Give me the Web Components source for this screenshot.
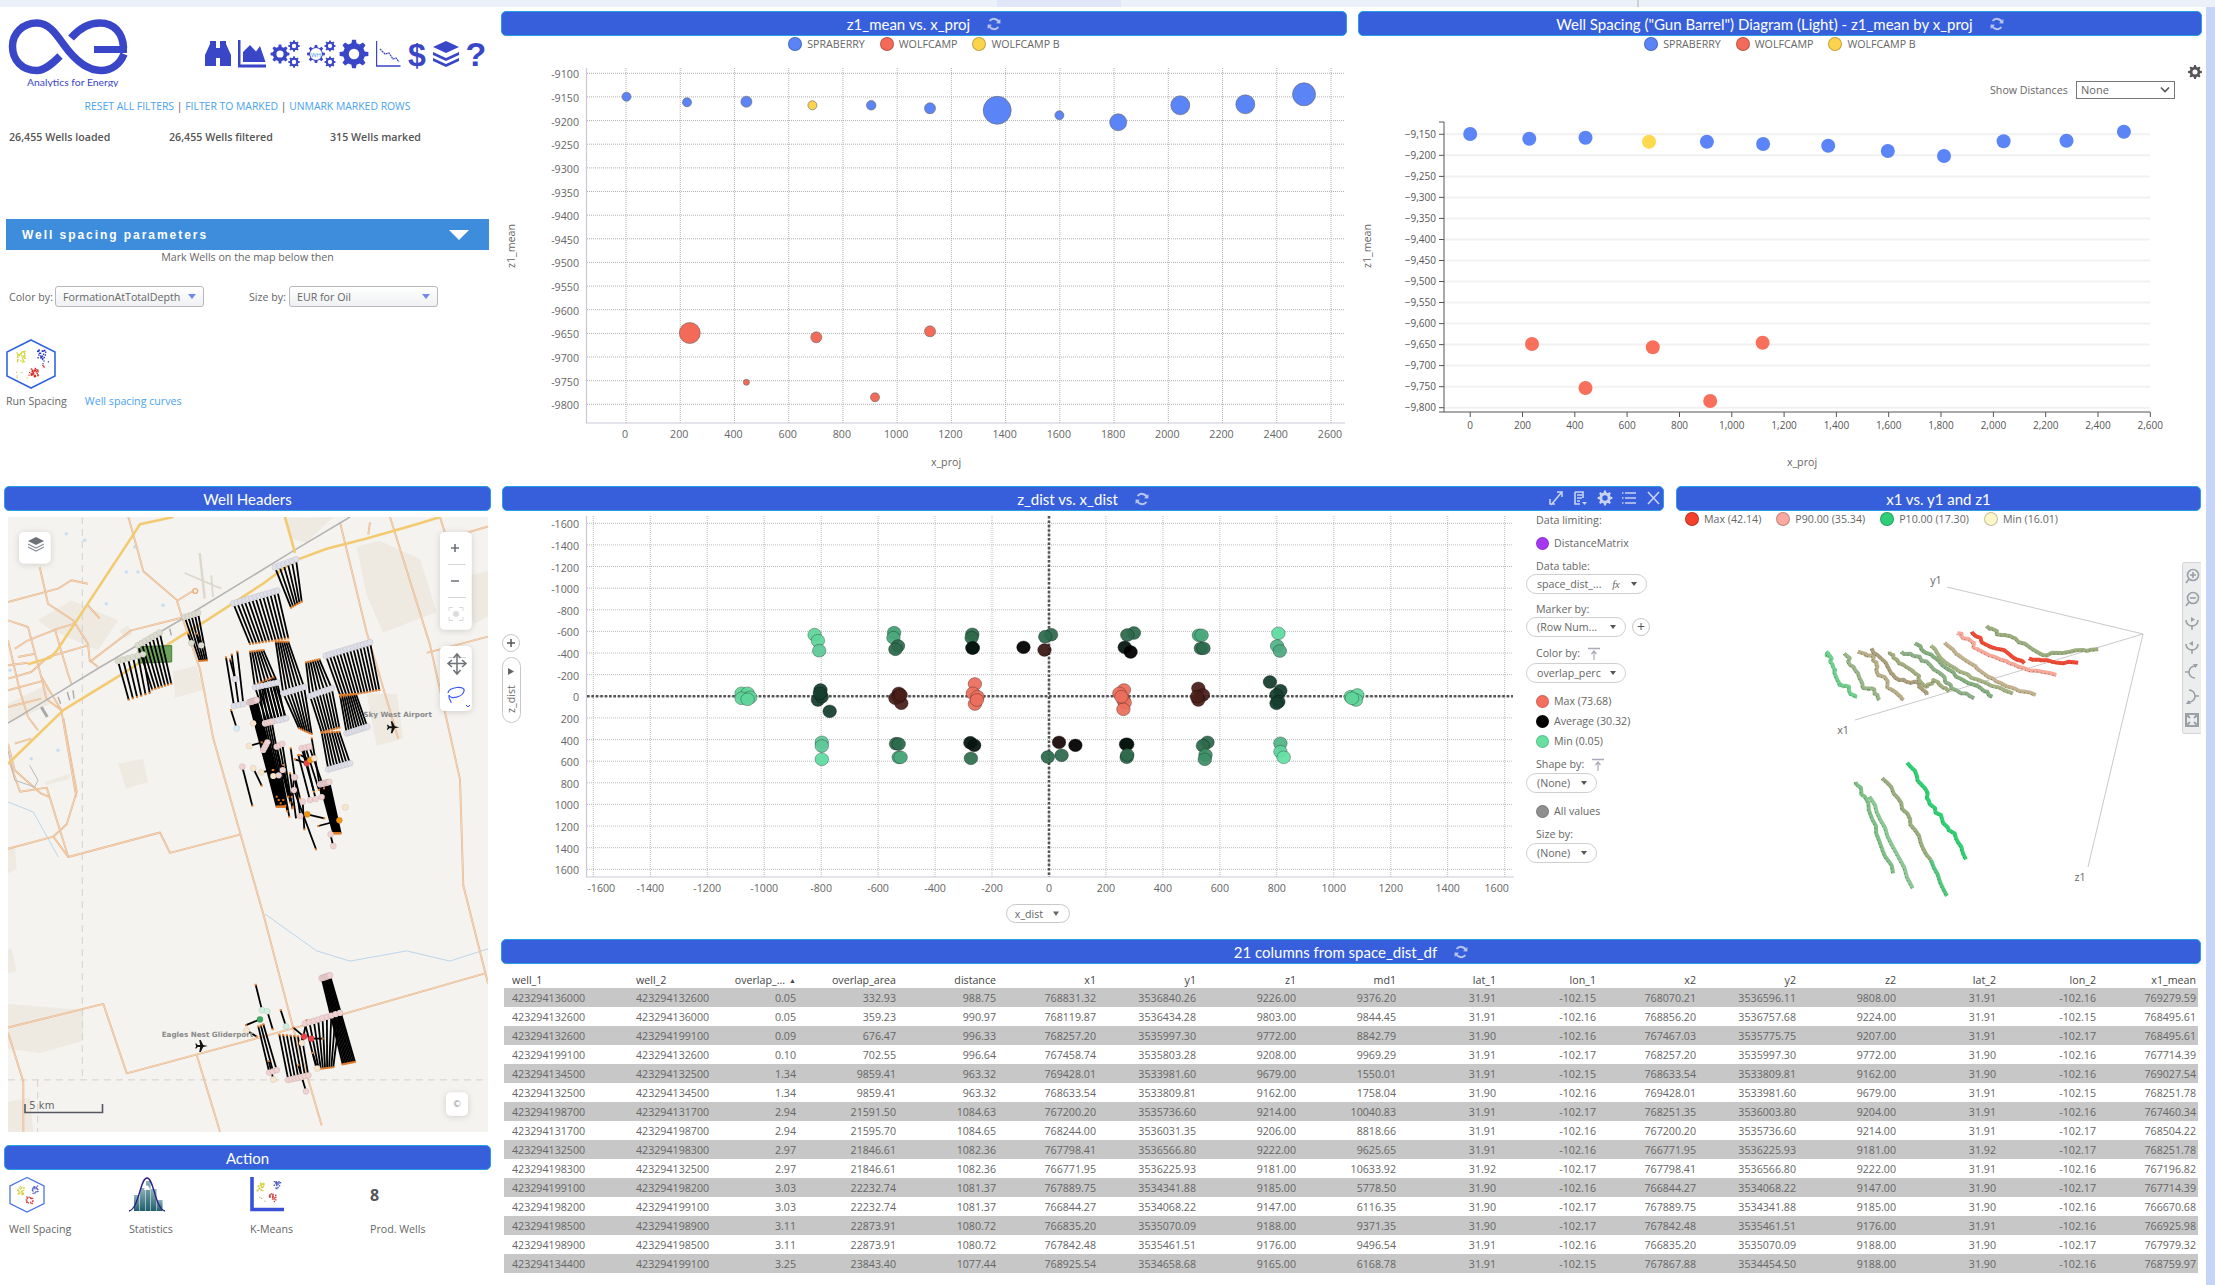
<!DOCTYPE html>
<html>
<head>
<meta charset="utf-8">
<title>Well Spacing</title>
<style>
  html, body { margin: 0; padding: 0; background: #fff; }
  body { font-family: "Open Sans", "Liberation Sans", sans-serif; font-size: 10.67px; color: #666; width: 2215px; height: 1285px; overflow: hidden; }
</style>
</head>
<body>
<app-shell>
  <top-strip></top-strip>
  <div style="display:flex;width:2215px;height:1278px">
    <left-column>
      <app-header></app-header>
      <filter-links></filter-links>
      <well-counts></well-counts>
      <spacing-params></spacing-params>
      <panel-title>Well Headers</panel-title>
      <well-map></well-map>
      <panel-title style="margin-top:13px">Action</panel-title>
      <action-row></action-row>
    </left-column>
    <right-column>
      <div style="display:flex;gap:11px;height:475px">
        <chart-panel style="width:846px" heading="z1_mean vs. x_proj" refresh>
          <chart-legend class="c" items="SPRABERRY:#5b84f7,WOLFCAMP:#f36b58,WOLFCAMP B:#fbd34d"></chart-legend>
          <bubble-chart></bubble-chart>
        </chart-panel>
        <chart-panel style="width:844px" heading='Well Spacing ("Gun Barrel") Diagram (Light) - z1_mean by x_proj' refresh>
          <chart-legend class="c" items="SPRABERRY:#5b84f7,WOLFCAMP:#f36b58,WOLFCAMP B:#fbd34d"></chart-legend>
          <barrel-chart></barrel-chart>
        </chart-panel>
      </div>
      <div style="display:flex;gap:12px;height:453px;margin-left:1px">
        <chart-panel style="width:1162px" heading="z_dist vs. x_dist" refresh actions>
          <div style="display:flex">
            <dist-chart></dist-chart>
            <marker-sidebar></marker-sidebar>
          </div>
        </chart-panel>
        <chart-panel style="width:525px" heading="x1 vs. y1 and z1">
          <chart-legend items="Max (42.14):#f4402c,P90.00 (35.34):#f9a99d,P10.00 (17.30):#2fce78,Min (16.01):#fdf6c9"></chart-legend>
          <view-3d></view-3d>
        </chart-panel>
      </div>
      <chart-panel style="width:1700px" heading="21 columns from space_dist_df" refresh>
        <data-table></data-table>
      </chart-panel>
    </right-column>
    <div style="width:9px;margin-left:4px;background:#c6d4f8"></div>
  </div>
</app-shell>

<script>
const BLUE = '#3a46c8';

function gearPath(cx, cy, r, teeth = 8, hole = 0.38) {
  const root = r * 0.76, pts = [], step = Math.PI * 2 / teeth;
  for (let i = 0; i < teeth; i++) {
    const a = i * step;
    [[-0.3, root], [-0.17, r], [0.17, r], [0.3, root]].forEach(([o, rad]) => {
      pts.push((cx + rad * Math.cos(a + o * step)).toFixed(2) + ' ' + (cy + rad * Math.sin(a + o * step)).toFixed(2));
    });
  }
  const h = r * hole;
  return 'M' + pts.join('L') + 'Z' + `M${cx - h} ${cy}a${h} ${h} 0 1 0 ${h * 2} 0a${h} ${h} 0 1 0 ${-h * 2} 0Z`;
}

// small repeatable random, the scatter icons need the same dots every time
function seeded(s) {
  return () => { s = (s * 16807) % 2147483647; return (s & 0xffff) / 0xffff; };
}

function scatterDots(rand, cx, cy, spread, n, color, size) {
  let out = '';
  for (let i = 0; i < n; i++) {
    const x = cx + (rand() - 0.5) * spread, y = cy + (rand() - 0.5) * spread * 1.2;
    out += `<rect x="${x.toFixed(1)}" y="${y.toFixed(1)}" width="${size}" height="${size}" fill="${color}"/>`;
  }
  return out;
}

function shell(el, html) {
  el.attachShadow({ mode: 'open' });
  el.shadowRoot.innerHTML = html;
}

class AppShell extends HTMLElement {
  connectedCallback() {
    shell(this, `<style>:host{display:block;width:2215px;height:1285px;overflow:hidden}</style><slot></slot>`);
  }
}

class TopStrip extends HTMLElement {
  connectedCallback() {
    shell(this, `<style>
      :host{display:block;height:7px;
        background:
          linear-gradient(#cfcfcf,#cfcfcf) 1637px 0/2px 7px no-repeat,
          linear-gradient(#e1e7f8,#e1e7f8) 997px 0/124px 7px no-repeat,
          #ecf0f9}
    </style>`);
  }
}

class LeftColumn extends HTMLElement {
  connectedCallback() {
    shell(this, `<style>:host{display:flex;flex-direction:column;width:501px;flex:none}
      ::slotted(panel-title){margin:0 10px 0 4px}</style><slot></slot>`);
  }
}

class RightColumn extends HTMLElement {
  connectedCallback() {
    shell(this, `<style>:host{display:block;width:1701px;flex:none;padding-top:4px}</style><slot></slot>`);
  }
}

class AppHeader extends HTMLElement {
  connectedCallback() {
    const gears = (x, r1, r2, hole) => `
      <path d="${gearPath(x, 54, r1, 8, hole)}" fill="${BLUE}" fill-rule="evenodd"/>
      <path d="${gearPath(x + 14, 46, r2, 8)}" fill="${BLUE}" fill-rule="evenodd"/>
      <path d="${gearPath(x + 14, 62, r2, 8)}" fill="${BLUE}" fill-rule="evenodd"/>`;
    shell(this, `<style>
      :host{display:flex;height:76px;padding:12px 0 0 7px;box-sizing:content-box;justify-content:space-between}
      svg{display:block}
    </style>
    <svg width="122" height="68" viewBox="7 19 122 68">
      <g fill="none" stroke="${BLUE}" stroke-width="7.5">
        <path d="M71 38C78 30 88 23 100 23C114 23 123 33 123.5 48"/>
        <path d="M60 56C53 63 45 70.5 37 70.5C22 70.5 12.5 60 12.5 46.5C12.5 33 23 23 37 23C49 23 56 34 64 45C72 56 85 70.5 101 70.5C112 70.5 120 64 124 54"/>
        <path d="M94 49.5H127" stroke-width="7"/>
      </g>
      <text x="27" y="86" font-family="Lato,sans-serif" font-size="10.4" fill="${BLUE}">Analytics for Energy</text>
    </svg>
    <svg width="290" height="60" viewBox="200 25 290 60" style="margin:6px 11px 0 0">
      <g fill="${BLUE}">
        <path d="M205 66V55L210 44V41H216V66ZM231 66V55L226 44V41H220V66ZM216 48H220V58H216Z"/>
        <path d="M238 40H240.5V64.5H266V67.5H238ZM243 62V52L250 45L256 51.5L260 46L265.5 62Z"/>
        ${gears(280, 9.5, 5.8, 0.38)}
        ${gears(316, 9, 5.6, 0.66)}
        <path d="${gearPath(354, 54, 14.5, 8, 0.36)}" fill-rule="evenodd"/>
        <path d="M376 41H377.2V65.2H400.5V66.8H376Z"/>
        <path d="M380 49L385 54L389 53L393 59L396 58L399 62" fill="none" stroke="${BLUE}" stroke-width="1.2" stroke-dasharray="2 .6"/>
        <path d="M446 41L459 47L446 53L433 47Z"/>
        <path d="M433 52L446 58L459 52V55L446 61L433 55Z"/>
        <path d="M433 58L446 64L459 58V61L446 67L433 61Z"/>
      </g>
      <text x="316" y="56.500" text-anchor="middle" font-family="Open Sans" font-size="6" fill="#3d9be8">WH</text>
      <g font-family="Liberation Sans" font-weight="700" fill="${BLUE}" text-anchor="middle">
        <text x="417" y="66" font-size="32">$</text>
        <text x="476" y="66" font-size="34">?</text>
      </g>
    </svg>`);
  }
}

class FilterLinks extends HTMLElement {
  connectedCallback() {
    shell(this, `<style>
      :host{display:block;height:22px;line-height:22px;text-align:center;width:495px;color:#4aa3ef;white-space:nowrap;font-size:10.4px}
      i{font-style:normal;color:#555}
    </style>RESET ALL FILTERS <i>|</i> FILTER TO MARKED <i>|</i> UNMARK MARKED ROWS`);
  }
}

class WellCounts extends HTMLElement {
  connectedCallback() {
    shell(this, `<style>
      :host{display:grid;grid-template-columns:160px 161px 160px;padding-left:9px;margin-top:13px;height:14px;line-height:14px;color:#555;font-weight:600}
    </style><span>26,455 Wells loaded</span><span>26,455 Wells filtered</span><span>315 Wells marked</span>`);
  }
}

class SelectBox extends HTMLElement {
  connectedCallback() {
    shell(this, `<style>
      :host{display:flex;align-items:center;justify-content:space-between;box-sizing:border-box;height:21px;width:149px;padding:0 7px;
        border:1px solid #b8b8bc;border-radius:3px;background:linear-gradient(#fff,#eef0f2);color:#666}
      b{width:0;height:0;border:4px solid transparent;border-top:5px solid #7089e8;border-bottom:0}
    </style><slot></slot><b></b>`);
  }
}

class SpacingParams extends HTMLElement {
  connectedCallback() {
    const rand = seeded(77);
    shell(this, `<style>
      :host{display:block;height:267px;margin-top:75px}
      .bar{margin-left:6px;width:483px;height:31px;background:#3e8ddd;color:#fff;display:flex;align-items:center;justify-content:space-between;padding:0 20px 0 16px;box-sizing:border-box;
        font:700 12px "Liberation Sans",sans-serif;letter-spacing:1.95px}
      .bar b{width:0;height:0;border:10px solid transparent;border-top:10px solid #fff;border-bottom:0}
      .note{text-align:center;width:495px;height:15px;line-height:15px;color:#666}
      .sel{display:flex;align-items:center;margin:21px 0 0 9px;height:21px}
      .sel span{width:46px}
      .sel span+select-box{margin-right:45px}
      .sel span.s{width:40px}
      svg{display:block;margin:32px 0 0 6px}
      .links{display:flex;margin:5px 0 0 6px;line-height:14px;gap:18px}
      .links a{color:#4aa3ef}
    </style>
    <div class="bar">Well spacing parameters<b></b></div>
    <div class="note">Mark Wells on the map below then</div>
    <div class="sel"><span>Color by:</span><select-box>FormationAtTotalDepth</select-box><span class="s">Size by:</span><select-box>EUR for Oil</select-box></div>
    <svg width="50" height="50" viewBox="6 339 50 50">
      <polygon points="31,340 55,352 55,376 31,388 7,376 7,352" fill="#fff" stroke="#3566e0" stroke-width="1.6"/>
      ${scatterDots(rand, 20, 356, 9, 34, '#d2d33c', 1.4)}${scatterDots(rand, 23, 368, 16, 5, '#c9c95a', 1.2)}
      ${scatterDots(rand, 41, 354, 8, 22, '#2430b8', 1.4)}${scatterDots(rand, 43, 362, 10, 4, '#2430b8', 1.2)}
      ${scatterDots(rand, 34, 372, 7, 28, '#d2231f', 1.4)}${scatterDots(rand, 36, 366, 16, 5, '#d2231f', 1.2)}
    </svg>
    <div class="links"><span>Run Spacing</span><a>Well spacing curves</a></div>`);
  }
}

class PanelTitle extends HTMLElement {
  connectedCallback() {
    const refresh = this.hasAttribute('refresh') ? `<svg width="14" height="14" viewBox="0 0 14 14" fill="none" stroke="#b8c4ea" stroke-width="2">
        <path d="M12 5.5A5.4 5.4 0 0 0 2.6 4M2 8.5A5.4 5.4 0 0 0 11.4 10"/>
        <path d="M9 6.2L13.4 6.6V2Z M5 7.8L.6 7.4V12Z" fill="#b8c4ea" stroke="none"/>
      </svg>` : '';
    shell(this, `<style>
      :host{display:grid;grid-template-columns:1fr auto 1fr;align-items:center;box-sizing:border-box;height:25px;background:#375fdb;border:1px solid #2a9fe8;border-radius:5px;
        color:#fff;font:15px/23px Lato,"Liberation Sans",sans-serif;white-space:nowrap}
      .t{grid-column:2;display:flex;align-items:center;gap:17px}
      .t span{position:relative;top:1px}
      .a{grid-column:3;display:flex;justify-content:flex-end}
    </style><div class="t"><span><slot></slot></span>${refresh}</div><div class="a"><slot name="actions"></slot></div>`);
  }
}

class ChartPanel extends HTMLElement {
  connectedCallback() {
    const heading = this.getAttribute('heading');
    const actions = this.hasAttribute('actions') ? `<svg slot="actions" width="116" height="23" viewBox="1548 487 116 23" style="display:block" fill="none" stroke="#c9d2f0" stroke-width="1.6">
        <path d="M1552 505L1562 493M1558 492H1563V497M1551 499V504H1556"/>
        <path d="M1576 492H1584V498M1576 492V504H1581M1578 495H1583M1578 498H1583M1578 501H1581"/>
        <path d="M1583 502H1588L1585.5 505Z" fill="#c9d2f0" stroke="none"/>
        <path d="${gearPath(1606, 498, 7.5, 8, 0.36)}" fill="#c9d2f0" fill-rule="evenodd" stroke="none"/>
        <path d="M1626 493H1637M1626 498H1637M1626 503H1637M1623 493H1624.5M1623 498H1624.5M1623 503H1624.5"/>
        <path d="M1649 492L1660 504M1660 492L1649 504"/>
      </svg>` : '';
    shell(this, `<style>:host{display:block}</style>
      <panel-title ${this.hasAttribute('refresh') ? 'refresh' : ''}>${heading.replace(/"/g, '&quot;')}${actions}</panel-title>
      <slot></slot>`);
  }
}

class ChartLegend extends HTMLElement {
  connectedCallback() {
    const items = this.getAttribute('items').split(',').map(s => s.split(':'));
    const center = this.classList.contains('c');
    shell(this, `<style>
      :host{display:flex;gap:15px;height:16px;align-items:center;color:#666;${center ? 'justify-content:center;' : 'padding-left:9px;'}}
      span{display:flex;align-items:center;gap:5px;white-space:nowrap}
      i{width:14px;height:14px;border-radius:50%;border:1px solid rgba(0,0,0,.22);box-sizing:border-box}
    </style>` + items.map(([t, c]) => `<span><i style="background:${c}"></i>${t}</span>`).join(''));
  }
}

class BubbleChart extends HTMLElement {
  connectedCallback() {
    const X = v => 626 + v * 0.27115, Y = v => 73.3 + (-9100 - v) * 0.47286;
    let grid = '', labels = '';
    for (let v = 0; v <= 2600; v += 200) {
      grid += `<line x1="${X(v)}" x2="${X(v)}" y1="68" y2="423"/>`;
      labels += `<text x="${X(v) - 1}" y="${438}" text-anchor="middle">${v}</text>`;
    }
    for (let v = -9100; v >= -9800; v -= 50) {
      const y = Y(v).toFixed(1);
      grid += `<line x1="587" x2="1345" y1="${y}" y2="${y}"/>`;
      labels += `<text x="579" y="${+y + 5}" text-anchor="end">${v}</text>`;
    }
    const pts = [
      [626.5, 96.7, 9, 0], [687, 102.3, 9, 0], [746.4, 101.7, 11, 0], [812.4, 105.3, 9, 2], [871.2, 105.3, 9.5, 0], [930, 108.3, 11, 0],
      [997.2, 110.3, 28, 0], [1059.4, 115.3, 9, 0], [1118.2, 122.3, 17, 0], [1180.3, 105.3, 19, 0], [1245.3, 104.3, 19, 0], [1304, 94.3, 23, 0],
      [689.8, 333, 21, 1], [816.3, 337.3, 11, 1], [930, 331.3, 11, 1], [746.4, 382.3, 6, 1], [875, 397.3, 9, 1]
    ];
    const cols = ['#5b84f7', '#f36b58', '#fbd34d'];
    shell(this, `<style>:host{display:block}svg{display:block}text{font:10.67px "Open Sans",sans-serif;fill:#666}</style>
      <svg width="846" height="434" viewBox="501 52 846 434">
        <g stroke="#b0b0b0" stroke-dasharray="1 1">${grid}</g>
        <path d="M586.5 68V423H1345" fill="none" stroke="#c9c9d8" stroke-width="1.2"/>
        ${pts.map(p => `<circle cx="${p[0]}" cy="${p[1]}" r="${p[2] / 2}" fill="${cols[p[3]]}" stroke="#666" stroke-width=".6"/>`).join('')}
        ${labels}
        <text x="946" y="466" text-anchor="middle">x_proj</text>
        <text transform="translate(515 246) rotate(-90)" text-anchor="middle">z1_mean</text>
      </svg>`);
  }
}

class BarrelChart extends HTMLElement {
  connectedCallback() {
    const X = v => 1470.2 + v * 0.26158, Y = v => 134.3 + (-9150 - v) * 0.42062;
    let grid = '', ticks = '', labels = '';
    for (let v = 0; v <= 2600; v += 200) {
      const x = X(v).toFixed(1);
      ticks += `M${x} 412V417`;
      labels += `<text x="${x}" y="${429}" text-anchor="middle">${v.toLocaleString('en-US')}</text>`;
    }
    for (let v = -9150; v >= -9800; v -= 50) {
      const y = Y(v).toFixed(1);
      grid += `<line x1="1444" x2="2150" y1="${y}" y2="${y}"/>`;
      ticks += `M1444 ${y}H1439`;
      labels += `<text x="1436" y="${+y + 3.5}" text-anchor="end">\u2212${Math.abs(v).toLocaleString('en-US')}</text>`;
    }
    const dots = [[218, 402, 0], [325, 416, 0], [427, 413, 0], [542, 425, 2], [647, 425, 0], [749, 432, 0], [867, 437, 0], [975, 453, 0], [1077, 468, 0], [1185, 424, 0], [1299, 422, 0], [1403, 395, 0],
      [330, 1032, 1], [549, 1042, 1], [748, 1028, 1], [427, 1164, 1], [653, 1203, 1]];
    const cols = ['#5b84f7', '#f8705c', '#fcd94f'];
    shell(this, `<style>:host{display:block}svg{display:block}text{font:10px "Open Sans",sans-serif;fill:#555}</style>
      <svg width="844" height="434" viewBox="1358 52 844 434">
        <g stroke="#f1f1f1" stroke-width="2">${grid}</g>
        <path d="M1444 122V412H2150 ${ticks} M1439 122H1444M1439 412H1444" fill="none" stroke="#555"/>
        ${dots.map(d => `<circle cx="${(1350 + d[0] / 1.813).toFixed(1)}" cy="${(d[1] / 3).toFixed(1)}" r="7" fill="${cols[d[2]]}"/>`).join('')}
        ${labels}
        <text x="1802" y="466" text-anchor="middle" style="font-size:10.67px;fill:#666">x_proj</text>
        <text transform="translate(1371 246) rotate(-90)" text-anchor="middle" style="font-size:10.67px;fill:#666">z1_mean</text>
        <path d="${gearPath(2195, 72, 7, 8, 0.36)}" fill="#555" fill-rule="evenodd"/>
        <text x="1990" y="94" style="font-size:10.67px;fill:#666">Show Distances</text>
        <rect x="2076.5" y="81.5" width="98" height="17" fill="#fff" stroke="#777"/>
        <text x="2081" y="94" style="font-size:11px;fill:#666">None</text>
        <path d="M2161 87.5L2165 91.5L2169 87.5" fill="none" stroke="#555" stroke-width="1.6"/>
      </svg>`);
  }
}

class DistChart extends HTMLElement {
  connectedCallback() {
    const px = X => +(490 + X / 1.522).toFixed(1), py = Y => +(480 + Y / 3).toFixed(1);
    const X = v => 1049 + v * 0.2848, Y = v => 696.3 + v * 0.10813;
    let grid = '', labels = '';
    for (let v = -1600; v <= 1600; v += 200) {
      const x = X(v).toFixed(1), y = Y(v).toFixed(1);
      grid += `<line x1="${x}" x2="${x}" y1="516" y2="877"/><line x1="587" x2="1513" y1="${y}" y2="${y}"/>`;
      const lx = v === -1600 ? +x + 8 : v === 1600 ? +x - 8 : +x;
      labels += `<text x="${lx}" y="892" text-anchor="middle">${v}</text>`;
      labels += `<text x="579" y="${+y + 5}" text-anchor="end">${v}</text>`;
    }
    const L = '#60d49a', M = '#4aa87a', D = '#2e6a4d', K = '#163f2f', N = '#061610', B = '#000', R = '#4a1f1a', O = '#ec6f5c', Q = '#1a0a08';
    const pts = [
      [494, 464, L], [499, 482, L], [501, 512, '#5ec898'],
      [615, 458, '#3fa070'], [614, 473, M], [621, 498, D], [617, 508, D],
      [734, 463, D], [733, 473, D], [735, 504, N], [734, 504, N],
      [812, 502, B], [854, 464, D], [845, 470, D], [844, 510, '#3a1915'],
      [980, 459, D], [970, 465, D], [966, 502, N], [975, 516, B],
      [1079, 466, M], [1083, 466, M], [1082, 505, D], [1086, 505, D],
      [1200, 460, '#60dba0'], [1198, 498, '#52b488'], [1202, 513, '#4fa880'],
      [383, 640, L], [392, 640, L], [396, 652, L], [383, 655, L], [392, 658, L],
      [503, 630, K], [499, 660, K], [505, 650, K], [502, 640, K], [517, 694, K],
      [622, 640, R], [617, 655, R], [626, 670, R], [622, 650, R], [625, 645, R],
      [738, 612, O], [735, 640, O], [742, 650, O], [738, 672, O], [741, 660, O],
      [965, 630, O], [958, 640, O], [964, 660, O], [966, 668, O], [964, 688, O], [961, 650, O],
      [1078, 625, R], [1085, 645, R], [1078, 660, R], [1076, 650, R],
      [1187, 606, K], [1203, 632, K], [1197, 645, K], [1200, 665, K], [1197, 670, K],
      [1310, 650, L], [1320, 645, L], [1318, 660, L], [1312, 655, L],
      [505, 787, '#60c89a'], [505, 798, '#60c89a'], [505, 838, '#60dba0'],
      [618, 791, D], [622, 792, D], [622, 832, M], [625, 832, M],
      [731, 788, N], [737, 796, N], [732, 835, '#30704f'],
      [866, 787, Q], [891, 796, B], [849, 831, D], [870, 826, D],
      [968, 793, N], [970, 793, N], [969, 832, D], [970, 825, D],
      [1092, 787, D], [1085, 797, D], [1089, 825, '#3e8f68'], [1088, 838, '#3e8f68'],
      [1203, 790, '#52b488'], [1203, 815, '#60d19c'], [1208, 832, '#66e0a5']
    ];
    shell(this, `<style>:host{display:block;flex:none}svg{display:block}text{font:10.67px "Open Sans",sans-serif;fill:#666}</style>
      <svg width="1024" height="428" viewBox="502 511 1024 428">
        <g stroke="#bcbcbc" stroke-dasharray="1 1">${grid}</g>
        <path d="M586.5 516V877H1514" fill="none" stroke="#c9c9d8" stroke-width="1.2"/>
        <path d="M587 696.3H1513M1049 516V877" stroke="#555" stroke-width="2.6" stroke-dasharray="2.6 1.8"/>
        ${pts.map(p => `<ellipse cx="${px(p[0])}" cy="${py(p[1])}" rx="6.8" ry="6.4" fill="${p[2]}" fill-opacity=".94" stroke="rgba(0,0,0,.4)" stroke-width=".7"/>`).join('')}
        ${labels}
        <circle cx="511" cy="643" r="8.5" fill="#fff" stroke="#c8c8c8"/>
        <path d="M507 643H515M511 639V647" stroke="#555" stroke-width="1.5"/>
        <rect x="502.5" y="657.5" width="18" height="65" rx="9" fill="#fff" stroke="#c8c8c8"/>
        <path d="M508 668L514 671.5L508 675Z" fill="#666"/>
        <text transform="translate(515 699) rotate(-90)" text-anchor="middle">z_dist</text>
        <rect x="1006.5" y="904.5" width="63" height="18" rx="9" fill="#fff" stroke="#c8c8c8"/>
        <text x="1029" y="918" text-anchor="middle">x_dist</text>
        <path d="M1053 911.5L1059 911.5L1056 916Z" fill="#666"/>
      </svg>`);
  }
}

class SidePill extends HTMLElement {
  connectedCallback() {
    shell(this, `<style>
      :host{display:flex;align-items:center;justify-content:space-between;box-sizing:border-box;height:20px;padding:0 9px 0 10px;border:1px solid #cfcfcf;border-radius:10px;background:#fff;white-space:nowrap}
      b{width:0;height:0;border:3.5px solid transparent;border-top:4px solid #555;border-bottom:0;margin-left:6px}
    </style><slot></slot><b></b>`);
  }
}

class MarkerSidebar extends HTMLElement {
  connectedCallback() {
    const pin = `<svg width="14" height="13" viewBox="0 0 14 13" fill="none" stroke="#aab" style="margin-left:7px"><path d="M1 1.5H13" stroke-width="1.5"/><path d="M7 13V5M4.5 7L7 4L9.5 7" stroke-width="1.2"/></svg>`;
    shell(this, `<style>
      :host{display:block;width:138px;padding-top:2px;color:#666;line-height:14px}
      .l{height:14px;white-space:nowrap;display:flex;align-items:center;padding-left:10px}
      .d{display:flex;align-items:center;gap:5px;height:14px;white-space:nowrap;padding-left:10px}
      .d i{width:13px;height:13px;border-radius:50%;border:1px solid rgba(0,0,0,.15);box-sizing:border-box}
      .r{display:flex;align-items:center;gap:6px}
      .plus{width:18px;height:18px;border:1px solid #c8c8c8;border-radius:50%;display:flex;align-items:center;justify-content:center;color:#555;box-sizing:border-box;font-size:14px;line-height:14px}
      side-pill{margin-top:1px}
    </style>
    <div class="l">Data limiting:</div>
    <div class="d" style="margin-top:9px"><i style="background:#a637f0"></i>DistanceMatrix</div>
    <div class="l" style="margin-top:9px">Data table:</div>
    <side-pill style="width:121px">space_dist_...&nbsp;&nbsp;<em style="font-family:'Liberation Serif'">fx</em></side-pill>
    <div class="l" style="margin-top:8px">Marker by:</div>
    <div class="r" style="margin-top:1px"><side-pill style="width:100px;margin:0">(Row Num...</side-pill><span class="plus">+</span></div>
    <div class="l" style="margin-top:9px">Color by:${pin}</div>
    <side-pill style="width:100px;margin-top:3px">overlap_perc</side-pill>
    <div class="d" style="margin-top:11px"><i style="background:#f36f5f"></i>Max (73.68)</div>
    <div class="d" style="margin-top:6px"><i style="background:#000"></i>Average (30.32)</div>
    <div class="d" style="margin-top:6px"><i style="background:#66dfa1"></i>Min (0.05)</div>
    <div class="l" style="margin-top:9px">Shape by:${pin}</div>
    <side-pill style="width:71px;margin-top:2px">(None)</side-pill>
    <div class="d" style="margin-top:11px"><i style="background:#8f8f8f"></i>All values</div>
    <div class="l" style="margin-top:9px">Size by:</div>
    <side-pill style="width:71px;margin-top:2px">(None)</side-pill>`);
  }
}

class View3d extends HTMLElement {
  connectedCallback() {
    const rand = seeded(4242);
    // the tubes in the 3d view are jagged, so break each run up with small steps
    const jag = p => {
      const out = [];
      for (let i = 0; i < p.length - 1; i++) {
        const [a, b] = p[i], [c, d] = p[i + 1];
        for (let k = 0; k < 5; k++) {
          const t = k / 5;
          out.push([a + (c - a) * t + (k ? (rand() - 0.5) * 9 : 0), b + (d - b) * t + (k ? (rand() - 0.5) * 8 : 0)]);
        }
      }
      out.push(p[p.length - 1]);
      return out;
    };
    const pt = ([X, Y]) => (1500 + X / 2.193).toFixed(1) + ',' + (480 + Y / 3).toFixed(1);
    const lines = [
      ['#6fcf8c', [[715, 515], [725, 540], [735, 570], [745, 615], [765, 625], [778, 655]]],
      ['#9ab58a', [[755, 520], [775, 560], [795, 620], [815, 625], [832, 660]]],
      ['#b9ae8a', [[785, 515], [820, 530], [825, 570], [860, 630], [885, 660]]],
      ['#ab9f7e', [[815, 505], [850, 560], [875, 600], [920, 610], [935, 645]]],
      ['#a3ad80', [[855, 515], [875, 550], [910, 580], [935, 620], [950, 600], [985, 635]]],
      ['#8fb088', [[880, 515], [920, 530], [960, 575], [990, 625], [1040, 655]]],
      ['#86ae80', [[910, 490], [950, 530], [1000, 590], [1050, 620], [1080, 650]]],
      ['#a6b385', [[945, 497], [985, 555], [1050, 600], [1125, 640]]],
      ['#c2b290', [[975, 488], [1020, 540], [1070, 590], [1120, 622], [1175, 645]]],
      ['#f7a89b', [[1003, 460], [1030, 480], [1050, 510], [1100, 540], [1150, 565], [1220, 585]]],
      ['#ee4a35', [[1035, 455], [1060, 490], [1110, 515], [1150, 550]]],
      ['#ee4a35', [[1160, 535], [1210, 545], [1268, 548]]],
      ['#9cae7f', [[1067, 438], [1100, 465], [1130, 475], [1190, 525], [1250, 515], [1312, 508]]],
      ['#80c088', [[780, 905], [800, 950], [825, 1060], [862, 1180]]],
      ['#8cc795', [[810, 950], [850, 1070], [905, 1225]]],
      ['#9bae80', [[838, 895], [880, 970], [910, 1050], [945, 1140]]],
      ['#52c87e', [[945, 1140], [980, 1248]]],
      ['#2fd072', [[893, 848], [925, 915], [940, 960], [970, 1020], [1000, 1075], [1022, 1138]]]
    ].map(([c, p]) => [c, jag(p)]);
    const tool = (y, body) => `<g transform="translate(2192 ${y})" fill="none" stroke="#9aa0a6" stroke-width="1.6">${body}</g>`;
    const glass = `<circle cx="1" cy="-1" r="5.5"/><path d="M-3 3L-6 7"/>`;
    shell(this, `<style>:host{display:block}svg{display:block}text{font:10.67px "Open Sans",sans-serif;fill:#666}</style>
      <svg width="525" height="412" viewBox="1676 527 525 412">
        <path d="M1855 720L2143 634M1947 587L2143 634L2088 867" fill="none" stroke="#c9c9c9"/>
        <text x="1936" y="584" text-anchor="middle">y1</text>
        <text x="1843" y="734" text-anchor="middle">x1</text>
        <text x="2080" y="881" text-anchor="middle">z1</text>
        ${lines.map(([c, p]) => `<polyline points="${p.map(pt).join(' ')}" fill="none" stroke="${c}" stroke-width="4" stroke-linejoin="round"/>
          <polyline points="${p.map(pt).join(' ')}" fill="none" stroke="#3b4a35" stroke-opacity=".6" stroke-width="1" stroke-dasharray="1 3" transform="translate(-1 1)"/>`).join('')}
        <rect x="2182.5" y="562.5" width="20" height="171" rx="2" fill="#eceded" stroke="#d4d4d4"/>
        ${tool(576, glass + '<path d="M-2-1H4M1-4V2"/>')}
        ${tool(599, glass + '<path d="M-2-1H4"/>')}
        ${tool(623, '<path d="M-6-3A6 6 0 0 0 6-3M0 2V7"/><path d="M-1-6V-1L3-3.500Z" fill="#9aa0a6" stroke="none"/>')}
        ${tool(647, '<path d="M-6-3A6 6 0 0 0 6-3M0 2V7"/><path d="M1-6V-1L-3-3.500Z" fill="#9aa0a6" stroke="none"/>')}
        ${tool(672, '<path d="M3-6A6 6 0 0 0 3 6M-3 0H-7"/><path d="M1-8H6L3.500-4Z" fill="#9aa0a6" stroke="none"/>')}
        ${tool(696, '<path d="M-3-6A6 6 0 0 1-3 6M3 0H7"/><path d="M-6 8H-1L-3.500 4Z" fill="#9aa0a6" stroke="none"/>')}
        ${tool(720, '<path d="M-6-6H6V6H-6Z M-6-6L-2-2M6-6L2-2M-6 6L-2 2M6 6L2 2" stroke-width="2"/>')}
      </svg>`);
  }
}

class DataTable extends HTMLElement {
  connectedCallback() {
    const cols = ['well_1', 'well_2', 'overlap_...', 'overlap_area', 'distance', 'x1', 'y1', 'z1', 'md1', 'lat_1', 'lon_1', 'x2', 'y2', 'z2', 'lat_2', 'lon_2', 'x1_mean'];
    const rows = `423294136000 423294132600 0.05 332.93 988.75 768831.32 3536840.26 9226.00 9376.20 31.91 -102.15 768070.21 3536596.11 9808.00 31.91 -102.16 769279.59
423294132600 423294136000 0.05 359.23 990.97 768119.87 3536434.28 9803.00 9844.45 31.91 -102.16 768856.20 3536757.68 9224.00 31.91 -102.15 768495.61
423294132600 423294199100 0.09 676.47 996.33 768257.20 3535997.30 9772.00 8842.79 31.90 -102.16 767467.03 3535775.75 9207.00 31.91 -102.17 768495.61
423294199100 423294132600 0.10 702.55 996.64 767458.74 3535803.28 9208.00 9969.29 31.91 -102.17 768257.20 3535997.30 9772.00 31.90 -102.16 767714.39
423294134500 423294132500 1.34 9859.41 963.32 769428.01 3533981.60 9679.00 1550.01 31.91 -102.15 768633.54 3533809.81 9162.00 31.90 -102.16 769027.54
423294132500 423294134500 1.34 9859.41 963.32 768633.54 3533809.81 9162.00 1758.04 31.90 -102.16 769428.01 3533981.60 9679.00 31.91 -102.15 768251.78
423294198700 423294131700 2.94 21591.50 1084.63 767200.20 3535736.60 9214.00 10040.83 31.91 -102.17 768251.35 3536003.80 9204.00 31.91 -102.16 767460.34
423294131700 423294198700 2.94 21595.70 1084.65 768244.00 3536031.35 9206.00 8818.66 31.91 -102.16 767200.20 3535736.60 9214.00 31.91 -102.17 768504.22
423294132500 423294198300 2.97 21846.61 1082.36 767798.41 3536566.80 9222.00 9625.65 31.91 -102.16 766771.95 3536225.93 9181.00 31.92 -102.17 768251.78
423294198300 423294132500 2.97 21846.61 1082.36 766771.95 3536225.93 9181.00 10633.92 31.92 -102.17 767798.41 3536566.80 9222.00 31.91 -102.16 767196.82
423294199100 423294198200 3.03 22232.74 1081.37 767889.75 3534341.88 9185.00 5778.50 31.90 -102.16 766844.27 3534068.22 9147.00 31.90 -102.17 767714.39
423294198200 423294199100 3.03 22232.74 1081.37 766844.27 3534068.22 9147.00 6116.35 31.90 -102.17 767889.75 3534341.88 9185.00 31.90 -102.16 766670.68
423294198500 423294198900 3.11 22873.91 1080.72 766835.20 3535070.09 9188.00 9371.35 31.90 -102.17 767842.48 3535461.51 9176.00 31.91 -102.16 766925.98
423294198900 423294198500 3.11 22873.91 1080.72 767842.48 3535461.51 9176.00 9496.54 31.91 -102.16 766835.20 3535070.09 9188.00 31.90 -102.17 767979.32
423294134400 423294199100 3.25 23843.40 1077.44 768925.54 3534658.68 9165.00 6168.78 31.91 -102.15 767867.88 3534454.50 9188.00 31.90 -102.16 768759.97
423294199100 423294134400 3.25 23843.40 1077.44 767867.88 3534454.50 9188.00 6444.51 31.90 -102.16 768925.54 3534658.68 9165.00 31.91 -102.15 767714.39`.split('\n').map(r => r.split(' '));
    const cell = (t, i) => `<div class="c${i < 2 ? ' l' : ''}">${t}</div>`;
    shell(this, `<style>
      :host{display:block;margin:6px 0 0 3px;width:1694px;height:309px;overflow:hidden;color:#666}
      .row{display:grid;grid-template-columns:124px 88px 84px repeat(14,100px);height:19px;line-height:21px;white-space:nowrap}
      .row.g{background:#c7c7c7}
      .head{height:18px;line-height:20px;color:#444}
      .c{text-align:right;padding-right:4px}
      .l{text-align:left;padding:0 0 0 8px}
      .s{font-size:7px;margin-left:4px;vertical-align:1px}
    </style>
    <div class="row head">${cols.map((t, i) => cell(i === 2 ? t + '<span class="s">\u25B2</span>' : t, i)).join('')}</div>
    ${rows.map((r, n) => `<div class="row${n % 2 ? '' : ' g'}">${r.map(cell).join('')}</div>`).join('')}`);
  }
}

class WellMap extends HTMLElement {
  connectedCallback() {
    // three sets of coordinates, each read from a different crop of the map
    const P = (X, Y) => [(X - 24) / 3, (Y - 17) / 2.45];       // whole map crop
    const W = (X, Y) => [212 + X / 3, 23 + Y / 3];             // crop over the wells
    const T3 = (X, Y) => [X / 3, Y / 3];                       // crop over the town
    const fmt = (a, f) => a.map(p => f(p[0], p[1]).map(v => v.toFixed(1)).join(',')).join(' ');
    const poly = (a, f, c) => `<polygon points="${fmt(a, f)}" fill="${c}"/>`;
    const line = (a, f, c, w, extra = '') => `<polyline points="${fmt(a, f)}" fill="none" stroke="${c}" stroke-width="${w}" stroke-linejoin="round" ${extra}/>`;
    const road = (a, f) => line(a, f, '#e8b183', 1.9) + line(a, f, '#f9f0e2', 0.6);

    const parcels = [
      [[520, 395], [590, 382], [610, 440], [525, 460]],
      [[1070, 90], [1140, 75], [1260, 120], [1310, 250], [1150, 300], [1100, 210]], [[1100, 450], [1190, 450], [1210, 560], [1130, 578]],
      [[24, 830], [45, 825], [50, 880], [24, 890]],
      [[24, 1210], [250, 1225], [250, 1300], [120, 1330], [24, 1320]], [[24, 1075], [35, 1075], [50, 1130], [24, 1135]],
      [[1400, 160], [1464, 150], [1464, 260], [1420, 280]], [[24, 1450], [90, 1440], [100, 1523], [24, 1523]],
      [[850, 20], [1000, 17], [920, 80], [870, 70]]
    ];
    const townParcels = [
      [[90, 310], [190, 250], [330, 310], [270, 400], [130, 340]], [[495, 470], [555, 448], [575, 520], [510, 540]],
      [[330, 740], [405, 725], [420, 795], [355, 815]], [[0, 560], [120, 500], [130, 560], [0, 620]], [[110, 795], [185, 770], [185, 785], [115, 805]],
      [[335, 340], [360, 325], [375, 350], [350, 365]]
    ];
    const roads = [
      [[385, 17], [410, 90], [430, 150], [530, 220], [545, 260], [600, 390], [640, 560], [720, 790], [790, 990], [880, 1270], [965, 1508]],
      [[1020, 30], [1100, 300], [1195, 560]],
      [[1170, 17], [1290, 330], [1380, 660], [1390, 920], [1464, 1160]],
      [[24, 830], [160, 800], [205, 850], [480, 790], [510, 840], [720, 795]],
      [[24, 1268], [310, 1210], [380, 1380], [880, 1270], [1455, 1135]],
      [[190, 510], [230, 690], [200, 770], [160, 800]],
      [[30, 620], [60, 690], [140, 680], [205, 850]],
      [[590, 1335], [660, 1523]], [[24, 1280], [70, 1400], [70, 1523]],
      [[1280, 350], [1464, 310]], [[1105, 60], [1110, 30]], [[1320, 17], [1340, 70], [1464, 40]]
    ];
    const townRoads = [
      [[95, 150], [120, 260], [195, 310], [240, 380], [245, 430], [270, 450]],
      [[0, 255], [150, 215], [190, 190], [240, 200]],
      [[245, 435], [370, 340], [530, 300]], [[240, 265], [275, 305]],
      [[0, 310], [60, 330], [100, 480], [160, 580], [205, 840]],
      [[60, 370], [150, 335], [200, 320]], [[20, 395], [60, 370]], [[140, 335], [180, 470], [190, 500]],
      [[0, 370], [35, 520], [60, 600]], [[0, 445], [60, 437]], [[120, 420], [240, 385]],
      [[0, 485], [70, 465], [120, 420]], [[0, 520], [110, 490]], [[0, 570], [100, 545]],
      [[100, 480], [115, 545], [160, 580]], [[0, 680], [20, 760], [100, 830], [125, 840]], [[20, 680], [70, 665]],
      [[510, 250], [550, 225], [562, 222]], [[60, 600], [90, 640]], [[30, 420], [80, 410]]
    ];
    const highways = [
      [[24, 622], [190, 490], [360, 405], [540, 310], [620, 270], [790, 180], [880, 125], [980, 95], [1100, 70], [1250, 35], [1320, 17]],
      [[84, 378], [150, 362], [170, 345], [400, 60], [420, 35], [520, 17]],
      [[855, 17], [885, 105]]
    ];
    const rail = [[24, 522], [130, 470], [300, 385], [540, 270], [760, 160], [880, 100], [1050, 17]];
    const railStubs = [[[100, 570], [118, 600], 3], [[150, 540], [158, 560], 1.4], [[178, 525], [185, 550], 1.4], [[195, 520], [198, 545], 1.4], [[485, 335], [490, 355], 1.4]];
    const water = [[380, 90], [355, 165], [390, 165], [295, 260], [150, 700], [70, 725], [465, 265], [175, 50], [230, 70], [6, 460]];

    const head = { g: '#dcdcd0', l: '#dfdfe9', p: '#f0d2d2', c: '#f6e6cb', o: '#ef9410', r: '#e8444a', b: '#d6ecf7', m: '#cfeede', e: '#3bab63' };
    let sticks = '', tails = '', heads = '';
    const well = (f, a, b, c, d, col) => {
      const h = f(a, b), t = f(c, d);
      sticks += `<line x1="${h[0].toFixed(1)}" y1="${h[1].toFixed(1)}" x2="${t[0].toFixed(1)}" y2="${t[1].toFixed(1)}"/>`;
      tails += `<rect x="${(t[0] - 1).toFixed(1)}" y="${(t[1] - 1).toFixed(1)}" width="2" height="2"/>`;
      if (col) heads += `<circle cx="${h[0].toFixed(1)}" cy="${h[1].toFixed(1)}" r="3.1" fill="${head[col]}"/>`;
    };
    // x1 y1 x2 y2 -> x3 y3 x4 y4, count, head colour
    const fan = (f, g) => {
      for (let i = 0; i < g[8]; i++) {
        const t = g[8] > 1 ? i / (g[8] - 1) : 0;
        well(f, g[0] + (g[2] - g[0]) * t, g[1] + (g[3] - g[1]) * t, g[4] + (g[6] - g[4]) * t, g[5] + (g[7] - g[5]) * t, g[9]);
      }
    };
    [
      [165, 82, 228, 58, 213, 203, 245, 185, 6, 'l'], [40, 190, 172, 152, 90, 312, 205, 295, 13, 'l'],
      [105, 442, 172, 428, 90, 335, 130, 330, 7, 'l'], [190, 460, 252, 441, 167, 305, 205, 305, 7, 'l'],
      [190, 460, 252, 441, 237, 565, 275, 582, 7, ''], [135, 550, 198, 535, 115, 430, 160, 412, 7, 'l'],
      [105, 442, 172, 428, 140, 545, 195, 535, 7, ''],
      [270, 468, 335, 445, 258, 367, 298, 358, 7, 'l'], [270, 468, 335, 445, 305, 577, 358, 563, 8, ''],
      [318, 347, 450, 307, 362, 470, 478, 450, 14, 'l'], [380, 580, 442, 560, 360, 465, 408, 462, 9, 'l'],
      [325, 688, 390, 670, 305, 578, 358, 575, 8, 'l'], [42, 498, 70, 492, 18, 352, 52, 335, 3, 'l'],
      [88, 487, 110, 480, 170, 800, 195, 800, 13, 'p'], [135, 550, 155, 545, 190, 780, 208, 830, 4, 'p'],
      [130, 630, 142, 607, 170, 770, 188, 800, 4, 'p'], [170, 620, 187, 612, 205, 770, 217, 805, 3, 'p'],
      [245, 625, 268, 620, 282, 755, 312, 745, 3, 'p'], [300, 733, 328, 726, 340, 880, 362, 880, 11, 'p']
    ].forEach(g => fan(W, g));
    [
      [45, 417, 30, 358, 'l'], [50, 565, 33, 510, 'b'], [67, 680, 97, 797, 'p'], [100, 685, 125, 737, 'c'], [88, 618, 125, 607, 'c'],
      [124, 697, 158, 690, 'c'], [262, 823, 313, 835, 'o'], [358, 841, 295, 858, 'o'], [260, 670, 225, 658, 'r'], [271, 660, 240, 645, 'o'],
      [283, 655, 283, 655, 'c'], [340, 918, 330, 880, 'p'], [376, 802, 376, 802, 'c'], [222, 750, 288, 928, 'p'], [225, 712, 240, 775, 'p'],
      [270, 780, 235, 645, 'p'], [287, 777, 250, 625, 'p'], [305, 771, 275, 595, 'p'], [228, 835, 210, 700, ''], [241, 828, 212, 625, 'p'],
      [248, 785, 253, 868, 'p'], [160, 708, 160, 690, 'c'], [176, 706, 190, 675, 'p'], [188, 690, 218, 800, 'p'], [223, 712, 215, 770, 'p'],
      [332, 883, 332, 883, 'p'], [100, 550, 100, 550, 'c']
    ].forEach(s => well(W, ...s));
    [[330, 432, 405, 412, 362, 548, 425, 528, 6, 'g'], [390, 385, 455, 347, 433, 518, 490, 500, 7, 'g'], [530, 300, 570, 288, 575, 432, 597, 430, 5, 'g']].forEach(g => fan(T3, g));
    [[550, 378, 540, 350, 'g'], [580, 385, 565, 350, 'g']].forEach(s => well(T3, ...s));
    [
      [965, 1147, 990, 1140, 1028, 1358, 1065, 1352, 9, 'p'], [915, 1258, 1020, 1232, 950, 1370, 1000, 1365, 9, 'p'],
      [865, 1396, 925, 1385, 838, 1285, 905, 1290, 7, 'p'], [808, 1378, 830, 1372, 775, 1265, 790, 1260, 3, 'p']
    ].forEach(g => fan(P, g));
    [
      [786, 1225, 767, 1163, 'm'], [802, 1228, 818, 1272, 'm'], [780, 1248, 738, 1262, 'e'], [858, 1265, 842, 1225, 'm'],
      [740, 1275, 770, 1290, 'c'], [820, 1395, 806, 1350, 'c'], [912, 1290, 880, 1268, 'r'], [934, 1295, 968, 1295, 'r'], [906, 1306, 920, 1250, 'c'],
      [952, 1368, 938, 1330, 'c'], [918, 1424, 895, 1360, 'p']
    ].forEach(s => well(P, ...s));

    const ctl = (X, Y, X2, Y2, rx = 5) => {
      const a = P(X, Y);
      return `<rect x="${a[0].toFixed(1)}" y="${a[1].toFixed(1)}" width="${((X2 - X) / 3).toFixed(1)}" height="${((Y2 - Y) / 2.45).toFixed(1)}" rx="${rx}" fill="#fff" filter="url(#sh)"/>`;
    };
    const plane = (X, Y) => {
      const [x, y] = P(X, Y);
      return `<path transform="translate(${x.toFixed(1)} ${y.toFixed(1)})" d="M6 0L1.500-1L-1-6H-2.500L-1.500-1H-4L-5.500-2.500H-6.500L-5.500 0L-6.500 2.500H-5.500L-4 1H-1.500L-2.500 6H-1L1.500 1Z" fill="#111"/>`;
    };
    const T = (X, Y, txt, s) => {
      const [x, y] = P(X, Y);
      return `<text x="${x.toFixed(1)}" y="${y.toFixed(1)}" ${s}>${txt}</text>`;
    };

    shell(this, `<style>:host{display:block;width:480px;height:615px;margin:6px 0 0 8px}svg{display:block}</style>
      <svg width="480" height="615" viewBox="0 0 480 615">
        <defs><filter id="sh" x="-30%" y="-30%" width="160%" height="160%"><feDropShadow dx="0" dy="1" stdDeviation="3" flood-opacity=".16"/></filter></defs>
        <rect width="480" height="615" fill="#f4f3f0"/>
        ${parcels.map(p => poly(p, P, '#eeeae2')).join('')}
        ${townParcels.map(p => poly(p, T3, '#eeeae2')).join('')}
        <g fill="#c9dff0">${water.map(w => `<circle cx="${(w[0] / 3).toFixed(1)}" cy="${(w[1] / 3).toFixed(1)}" r="1.8"/>`).join('')}</g>
        ${line([[247, 17], [247, 1396]], P, '#d2d2d0', 1, 'stroke-dasharray="7 5"')}
        ${line([[24, 1396], [1464, 1396]], P, '#d2d2d0', 1, 'stroke-dasharray="7 5"')}
        ${line([[113, 1396], [113, 1523]], P, '#d2d2d0', 1, 'stroke-dasharray="7 5"')}
        ${line([[795, 990], [950, 1080], [1050, 1105], [1220, 1080], [1350, 1105], [1464, 1075]], P, '#bcd6ea', 1)}
        ${line([[24, 715], [100, 740], [175, 850]], P, '#bcd6ea', 1)}
        ${line([[575, 108], [590, 245]], T3, '#dcd8cc', 2.4)}${line([[530, 168], [640, 215]], T3, '#dcd8cc', 1.8)}${line([[610, 175], [615, 240]], T3, '#dcd8cc', 1.8)}
        ${roads.map(r => road(r, P)).join('')}
        ${townRoads.map(r => road(r, T3)).join('')}
        <circle cx="187.300" cy="74" r="2.400" fill="#f9f0e2" stroke="#e8b183" stroke-width="1.400"/>
        ${line(rail, P, '#b4b4b4', 1.6)}
        ${railStubs.map(s => line([s[0], s[1]], T3, '#a9a9a9', s[2])).join('')}
        ${line([[0, 700], [20, 790], [80, 810], [90, 790], [65, 745]], T3, '#b9b9b9', 1)}
        ${highways.map(h => line(h, P, '#f3ca70', 2.6)).join('')}
        <polygon points="${fmt([[415, 335], [515, 332], [515, 372], [415, 375]], P)}" fill="#6ba35a" stroke="#4d7d3f"/>
        <g stroke="#000" stroke-width="1.8">${sticks}</g>
        <g fill="#e07b2a">${tails}</g>
        <g stroke="rgba(0,0,0,.14)" stroke-width=".5">${heads}</g>
        ${plane(1180, 532)}${plane(605, 1313)}
        <g font-family="DejaVu Sans" font-weight="700" font-size="7.2" fill="#8a8a8a">
          ${T(1090, 506, 'Sky West Airport', '')}${T(485, 1290, 'Eagles Nest Gliderport', '')}
        </g>
        ${ctl(57, 54, 152, 131)}${ctl(1320, 54, 1415, 293)}${ctl(1320, 333, 1415, 492)}${ctl(1338, 1427, 1404, 1484)}
        <path d="M20 24L28 20L36 24L28 28Z" fill="#6d7279"/><path d="M20 27L28 31L36 27M20 30L28 34L36 30" fill="none" stroke="#8b9099" stroke-width="1.2"/>
        <path d="M443 31H451M447 27V35M443 64H451" fill="none" stroke="#6d7279" stroke-width="1.6"/>
        <path d="M440 47.500H458M440 80.500H458M440 140.500H458" stroke="#d6d6d6"/>
        <circle cx="448" cy="97" r="3" fill="#dcdcdc"/>
        <path d="M441 94V90.500H445M451 90.500H455V94M441 100V103.500H445M451 103.500H455V100" fill="none" stroke="#d8d8d8"/>
        <path d="M449 138V157M441 146.500H458M445.500 141L449 137L452.500 141M445.500 153L449 157L452.500 153M444 143L440 146.500L444 150M454 143L458 146.500L454 150" fill="none" stroke="#6d7279" stroke-width="1.5"/>
        <path d="M440 176C440 170 458 168 456 174C455 180 442 183 441 178C440 183 444 184 443 186" fill="none" stroke="#3d5bf0" stroke-width="1.2"/>
        <path d="M458 188L460 190L462 188" fill="none" stroke="#3d5bf0"/>
        ${T(88, 1467, '5 km', 'font-family="DejaVu Sans" font-size="10" fill="#666"')}
        <path d="M17 587V595.500H94.500V587" fill="none" stroke="#55595f" stroke-width="1.6"/>
        ${T(1371, 1462, '\u00A9', 'font-family="DejaVu Sans" font-size="9" fill="#999" text-anchor="middle"')}
      </svg>`);
  }
}

class ActionRow extends HTMLElement {
  connectedCallback() {
    const r = seeded(31);
    const hex = `<svg width="36" height="36" viewBox="9 1177 36 36"><polygon points="27,1177.500 44,1186 44,1203.500 27,1212 10,1203.500 10,1186" fill="#fff" stroke="#4c74e6" stroke-width="1.3"/>
      ${scatterDots(r, 20, 1190, 7, 26, '#d2d24a', 1.3)}${scatterDots(r, 34, 1189, 7, 18, '#4d56c4', 1.3)}${scatterDots(r, 29, 1200, 7, 18, '#d23c40', 1.3)}</svg>`;
    const bars = [[134, 1195, 6], [140, 1188, 6], [146, 1181, 5], [151, 1189, 6], [157, 1200, 6]];
    const stat = `<svg width="36" height="36" viewBox="129 1177 36 36"><defs><linearGradient id="tg" x1="0" y1="0" x2="0" y2="1"><stop offset="0" stop-color="#8fb4b8"/><stop offset="1" stop-color="#1e5d6c"/></linearGradient></defs>
      ${bars.map(b => `<rect x="${b[0]}" y="${b[1]}" width="${b[2] - .5}" height="${1211 - b[1]}" fill="url(#tg)"/>`).join('')}
      <path d="M129 1211C139 1209 140 1178 147 1178C154 1178 155 1209 165 1211" fill="none" stroke="#2c1f8c" stroke-width="1.3"/>
      <path d="M144 1190C145 1184 149 1184 150 1190Z" fill="#fff"/></svg>`;
    const km = `<svg width="36" height="36" viewBox="250 1177 36 36"><path d="M252 1177V1209.500H284" fill="none" stroke="#3a50d8" stroke-width="3.6"/>
      ${scatterDots(r, 260, 1186, 7, 26, '#d2d24a', 1.4)}${scatterDots(r, 277, 1185, 7, 18, '#4d56c4', 1.4)}${scatterDots(r, 272, 1197, 7, 18, '#d23c40', 1.4)}${scatterDots(r, 265, 1195, 12, 4, '#b4b060', 1.1)}</svg>`;
    shell(this, `<style>
      :host{display:grid;grid-template-columns:120px 121px 120px 120px;margin:7px 0 0 9px;color:#666}
      div{display:flex;flex-direction:column}
      svg{display:block}
      .i{height:36px;margin-bottom:9px;display:flex;flex-direction:row;align-items:center;font:700 16px "Open Sans",sans-serif;color:#555}
      span{line-height:14px}
    </style>
    <div><div class="i">${hex}</div><span>Well Spacing</span></div>
    <div><div class="i">${stat}</div><span>Statistics</span></div>
    <div><div class="i">${km}</div><span>K-Means</span></div>
    <div><div class="i">8</div><span>Prod. Wells</span></div>`);
  }
}

customElements.define('app-shell', AppShell);
customElements.define('top-strip', TopStrip);
customElements.define('left-column', LeftColumn);
customElements.define('right-column', RightColumn);
customElements.define('app-header', AppHeader);
customElements.define('filter-links', FilterLinks);
customElements.define('well-counts', WellCounts);
customElements.define('select-box', SelectBox);
customElements.define('spacing-params', SpacingParams);
customElements.define('panel-title', PanelTitle);
customElements.define('chart-panel', ChartPanel);
customElements.define('chart-legend', ChartLegend);
customElements.define('bubble-chart', BubbleChart);
customElements.define('barrel-chart', BarrelChart);
customElements.define('dist-chart', DistChart);
customElements.define('side-pill', SidePill);
customElements.define('marker-sidebar', MarkerSidebar);
customElements.define('view-3d', View3d);
customElements.define('data-table', DataTable);
customElements.define('well-map', WellMap);
customElements.define('action-row', ActionRow);
</script>
</body>
</html>
